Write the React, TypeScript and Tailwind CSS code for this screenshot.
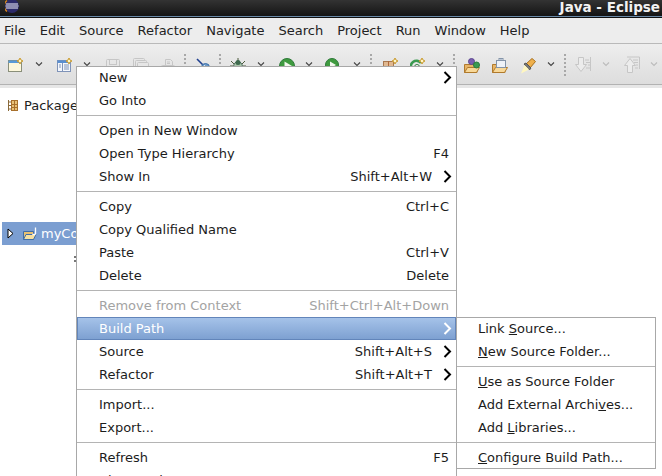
import React from "react";

const Chev = ({ dim }: { dim?: boolean }) => (
  <svg width="8" height="6" viewBox="0 0 8 6" className="mt-[3px] block">
    <path d="M1 1.5 L4 4.5 L7 1.5" fill="none" stroke={dim ? "#bcbcbc" : "#444444"} strokeWidth="1.1" />
  </svg>
);

const Sep = () => (
  <svg width="2" height="23" viewBox="0 0 2 23" className="-mt-[5px] block">
    {[1, 5, 9, 13, 17, 21].map((y) => (
      <rect key={y} x="0" y={y} width="2" height="2" fill="#a8a8a8" />
    ))}
  </svg>
);

const Star = ({ x = 11, y = 3 }: { x?: number; y?: number }) => (
  <path
    d={`M${x} ${y - 3} L${x + 1} ${y - 1} L${x + 3} ${y} L${x + 1} ${y + 1} L${x} ${y + 3} L${x - 1} ${y + 1} L${x - 3} ${y} L${x - 1} ${y - 1} Z`}
    fill="#fff6c8"
    stroke="#c99a2e"
    strokeWidth="1"
  />
);

const NewWin = () => (
  <svg width="16" height="16" viewBox="0 0 16 16" className="block">
    <rect x="0.5" y="2.5" width="13" height="11" fill="#fdf8dc" stroke="#8a8f7a" />
    <rect x="0.5" y="2.5" width="13" height="2.5" fill="#5a9bd8" />
    <Star x={12} y={3} />
  </svg>
);
const NewPkg = () => (
  <svg width="16" height="16" viewBox="0 0 16 16" className="block">
    <rect x="0.5" y="2.5" width="13" height="11" fill="#f4f7fc" stroke="#7f93b8" />
    <rect x="0.5" y="2.5" width="13" height="2.5" fill="#5a8fd0" />
    <path d="M5.5 5v8M7 7h5M7 9h5M7 11h5M2 7h2M2 9h2" stroke="#7f93b8" />
    <Star x={12} y={3} />
  </svg>
);
const Save = () => (
  <svg width="16" height="16" viewBox="0 0 16 16" fill="none" stroke="#c6c6c6" className="block">
    <rect x="1.5" y="1.5" width="13" height="13" rx="1" />
    <rect x="4.5" y="1.5" width="7" height="5" />
    <rect x="4.5" y="9.5" width="7" height="5" />
  </svg>
);
const SaveAll = () => (
  <svg width="16" height="16" viewBox="0 0 16 16" fill="none" stroke="#c6c6c6" className="block">
    <rect x="0.5" y="0.5" width="11" height="11" rx="1" />
    <rect x="2.5" y="2.5" width="11" height="11" rx="1" fill="#e6e6e6" />
    <rect x="4.5" y="4.5" width="11" height="11" rx="1" fill="#e6e6e6" />
  </svg>
);
const Print = () => (
  <svg width="16" height="16" viewBox="0 0 16 16" fill="none" stroke="#c6c6c6" className="block">
    <path d="M5.5 7V1.5h5l2 2V7" />
    <rect x="1.5" y="7.5" width="13" height="6" rx="1" />
    <path d="M7 4h3M7 5.5h3" />
  </svg>
);
const Pin = () => (
  <svg width="16" height="16" viewBox="0 0 16 16" className="block">
    <path d="M1 1 L8 8" stroke="#1f3f8f" strokeWidth="1.6" />
    <circle cx="9.5" cy="9.5" r="4" fill="#6f9bc8" stroke="#3a6da8" />
    <path d="M8 7 L12 12" stroke="#e4ecf5" />
  </svg>
);
const Bug = () => (
  <svg width="16" height="16" viewBox="0 0 16 16" className="block">
    <path d="M8 0v3M1 3l3 3M15 3l-3 3M0 8h3M16 8h-3M1 14l3-3M15 14l-3-3" stroke="#4c5a3c" />
    <ellipse cx="8" cy="9" rx="4.5" ry="5.5" fill="#a9c4a9" stroke="#4c6a5c" />
    <circle cx="8" cy="4.5" r="2.5" fill="#3e6a4e" />
  </svg>
);
const Run = () => (
  <svg width="16" height="16" viewBox="0 0 16 16" className="block">
    <circle cx="8" cy="8" r="7.5" fill="#3f9a3f" stroke="#2e7a3a" />
    <path d="M5.5 3.5 L13 8 L5.5 12.5 Z" fill="#f4f8ee" />
  </svg>
);
const Coverage = () => (
  <svg width="16" height="16" viewBox="0 0 16 16" className="block">
    <circle cx="7" cy="7" r="6.5" fill="#3f9a3f" stroke="#2e7a3a" />
    <path d="M5 3.5 L11 7 L5 10.5 Z" fill="#f4f8ee" />
    <rect x="9.5" y="11.5" width="5" height="3" fill="#fff" stroke="#d8283c" strokeWidth="1.2" />
  </svg>
);
const NewType = () => (
  <svg width="16" height="16" viewBox="0 0 16 16" className="block">
    <rect x="0.5" y="3.5" width="10" height="10" fill="#e0b890" stroke="#a87850" />
    <path d="M0 8.5h11M5.5 3v11" stroke="#b0683c" />
    <path d="M0 13.5h11" stroke="#c03838" />
    <Star x={12} y={3} />
  </svg>
);
const NewClass = () => (
  <svg width="16" height="16" viewBox="0 0 16 16" className="block">
    <path d="M2 12a5.5 5.5 0 0 1 9-7" fill="none" stroke="#3a9a50" strokeWidth="2.6" />
    <path d="M5 14.5a5 5 0 0 0 6-3" fill="none" stroke="#3a9a50" strokeWidth="2.6" />
    <circle cx="7" cy="9" r="2.5" fill="#fff" stroke="#2e7a3a" />
    <Star x={12} y={3} />
  </svg>
);
const FolderBase = () => (
  <>
    <path d="M0.5 14.5 V6.5 H13 V14.5 Z" fill="#e8b568" stroke="#b07a2c" />
    <path d="M0.5 14.5 L3.5 9.5 H15.5 L12.5 14.5 Z" fill="#f8d898" stroke="#b07a2c" />
  </>
);
const Open1 = () => (
  <svg width="16" height="16" viewBox="0 0 16 16" className="block">
    <FolderBase />
    <circle cx="7.5" cy="3.5" r="3" fill="#7a5fb0" stroke="#5c4790" />
    <circle cx="12.5" cy="7" r="3" fill="#3a9a50" stroke="#2a7a40" />
  </svg>
);
const Open2 = () => (
  <svg width="16" height="16" viewBox="0 0 16 16" className="block">
    <FolderBase />
    <rect x="4.5" y="2.5" width="9" height="7" fill="#eef2f8" stroke="#8494a8" />
    <rect x="7" y="0.5" width="4" height="2" fill="#b8c4d4" stroke="#8494a8" />
  </svg>
);
const Pen = () => (
  <svg width="16" height="16" viewBox="0 0 16 16" className="block">
    <path d="M6 6 L12 0.5 L15.5 3.5 L10 10 Z" fill="#efb04c" stroke="#a8701c" />
    <path d="M4 6 L6 5 L11 10 L9.5 12 Z" fill="#777" stroke="#555" />
    <path d="M4.5 7 L9 11.5 L1 15.5 Z" fill="#fff7c0" />
  </svg>
);
const ArrowDown = () => (
  <svg width="16" height="18" viewBox="0 0 16 18" className="-mt-[2px] block" fill="none" stroke="#c6c6c6">
    <path d="M3.5 1.5h5v7h3l-5.5 7-5.5-7h3z" fill="#ececec" />
    <path d="M10 4h4M11 6.5h4M13 9h2M11 12h4M15.5 1v14" />
  </svg>
);
const ArrowUp = () => (
  <svg width="16" height="18" viewBox="0 0 16 18" className="-mt-[2px] block" fill="none" stroke="#c6c6c6">
    <path d="M3.5 16.5h5v-7h3L6 2.500l-5.500 7h3z" fill="#ececec" />
    <path d="M3 1h12.500v12M9 4h5M10 6.500h4M12 9h2M11 12h3" />
  </svg>
);

const Arrow = ({ white }: { white?: boolean }) => (
  <svg width="9" height="13" viewBox="0 0 9 13" className="absolute right-[4px] top-[5px]">
    <path d="M1.5 1 L7 6.500 L1.500 12" fill="none" stroke={white ? "#ffffff" : "#000000"} strokeWidth="2" />
  </svg>
);

type Entry = {
  label?: React.ReactNode;
  key2?: string;
  sub?: boolean;
  disabled?: boolean;
  active?: boolean;
};

const MenuRow = ({ label, key2, sub, disabled, active }: Entry) => (
  <div
    className={`relative flex h-[23px] items-center justify-between pl-[22px] ${sub ? "pr-[24px]" : "pr-[7px]"} ${
      active
        ? "bg-gradient-to-b from-[#a7c4ea] to-[#7c9fd0] text-white shadow-[inset_0_0_0_1px_#6285ba]"
        : disabled
          ? "text-[#a3a3a3]"
          : "text-[#1c1c1c]"
    }`}
  >
    <span>{label}</span>
    {key2 && <span>{key2}</span>}
    {sub && <Arrow white={active} />}
  </div>
);

const Divider = () => (
  <div className="flex h-[7px] items-center">
    <div className="h-px w-full bg-[#b4b4b4]" />
  </div>
);

const SubRow = ({ children }: { children: React.ReactNode }) => (
  <div className="flex h-[23px] items-center pl-[21px] text-[#1c1c1c]">{children}</div>
);

const menus = ["File", "Edit", "Source", "Refactor", "Navigate", "Search", "Project", "Run", "Window", "Help"];

export default function App() {
  return (
    <div className="relative h-[476px] w-[662px] overflow-hidden bg-white font-['DejaVu_Sans',sans-serif] text-[13px] leading-none">
      {/* Title bar */}
      <div className="flex h-[16px] items-start justify-between overflow-hidden bg-gradient-to-b from-[#333333] to-[#151515] pl-[5px] pr-[2px]">
        <svg width="14" height="13" viewBox="0 0 14 13" className="block shrink-0">
          <circle cx="7" cy="6" r="7" fill="#2c2a6a" />
          <path d="M2 0.500 A7 7 0 0 0 2 11.500" fill="none" stroke="#e08a1e" strokeWidth="1.200" />
          <path d="M1 4h12M0.500 6h13M1 8h12" stroke="#f2f2fa" strokeWidth="1.200" />
        </svg>
        <span className="mt-[1px] text-[13.5px] font-bold text-[#f2f2f2]">Java - Eclipse</span>
      </div>
      <div className="h-px bg-[#6a8aa8]" />
      <div className="h-px bg-[#111111]" />

      {/* Menu bar */}
      <div className="flex h-[26px] items-center gap-[14px] border-b border-[#b9b9b9] bg-[#ededed] pl-[4px] text-[#222222]">
        {menus.map((m) => (
          <span key={m}>{m}</span>
        ))}
      </div>

      {/* Toolbar */}
      <div className="flex h-[41px] items-start overflow-hidden border-b border-[#b2b2b2] bg-gradient-to-b from-[#eeeeee] to-[#dddddd] pl-[8px] pt-[14px] *:shrink-0">
        <NewWin />
        <div className="ml-[11px]"><Chev /></div>
        <div className="ml-[14px]"><NewPkg /></div>
        <div className="ml-[10px]"><Chev /></div>
        <div className="ml-[14px]"><Save /></div>
        <div className="ml-[12px]"><SaveAll /></div>
        <div className="ml-[11px]"><Print /></div>
        <div className="ml-[8px]"><Sep /></div>
        <div className="ml-[10px]"><Pin /></div>
        <div className="ml-[7px]"><Sep /></div>
        <div className="ml-[9px]"><Bug /></div>
        <div className="ml-[11px]"><Chev /></div>
        <div className="ml-[14px]"><Run /></div>
        <div className="ml-[10px]"><Chev /></div>
        <div className="ml-[12px]"><Coverage /></div>
        <div className="ml-[12px]"><Chev /></div>
        <div className="ml-[9px]"><Sep /></div>
        <div className="ml-[11px]"><NewType /></div>
        <div className="ml-[11px]"><NewClass /></div>
        <div className="ml-[10px]"><Chev /></div>
        <div className="ml-[9px]"><Sep /></div>
        <div className="ml-[9px]"><Open1 /></div>
        <div className="ml-[12px]"><Open2 /></div>
        <div className="ml-[12px]"><Pen /></div>
        <div className="ml-[11px]"><Chev /></div>
        <div className="ml-[9px]"><Sep /></div>
        <div className="ml-[9px]"><ArrowDown /></div>
        <div className="ml-[11px]"><Chev dim /></div>
        <div className="ml-[14px]"><ArrowUp /></div>
        <div className="ml-[10px]"><Chev dim /></div>
      </div>

      {/* Strip under toolbar */}
      <div className="h-[3px] bg-[#e6e6e6]" />

      {/* Package explorer */}
      <div className="h-[389px] w-[76px] overflow-hidden rounded-tl-[6px] bg-white">
        <div className="flex h-[34px] items-center whitespace-nowrap pl-[8px] pt-[1px] text-[#222222]">
          <svg width="10" height="13" viewBox="0 0 10 13" fill="none" className="block shrink-0">
            <path d="M0.500 1v11M0.500 3h3M0.500 6.500h3M0.500 10h3" stroke="#8a6a3a" />
            <rect x="3.500" y="1.500" width="6" height="4" fill="#e8c27a" stroke="#a8702c" />
            <rect x="3.500" y="5.500" width="6" height="3" fill="#e8c27a" stroke="#a8702c" />
            <rect x="3.500" y="8.500" width="6" height="3" fill="#e8c27a" stroke="#a8702c" />
            <path d="M6.500 1.500v10" stroke="#a8702c" />
          </svg>
          <span className="ml-[6px]">Package Explorer</span>
        </div>
        <div className="ml-[2px] mt-[100px] flex h-[23px] items-center whitespace-nowrap bg-[#7b9ed1] text-white">
          <svg width="7" height="11" viewBox="0 0 7 11" className="ml-[5px] block shrink-0">
            <path d="M1 1 L6 5.500 L1 10 Z" fill="#ffffff" stroke="#000000" />
          </svg>
          <svg width="16" height="14" viewBox="0 0 16 14" className="ml-[9px] block shrink-0">
            <path d="M0.500 12.500V4.500h10v8z" fill="#e8c070" stroke="#3f6da8" />
            <path d="M0.500 12.500 L3 7.500H13L10.500 12.500Z" fill="#f6e0a0" stroke="#3f6da8" />
            <path d="M12.500 0.500V7M12.500 7a2 2 0 0 1-3 0" fill="none" stroke="#ffffff" strokeWidth="1.300" />
          </svg>
          <span className="ml-[2px]">myCoverage</span>
        </div>
        <div className="ml-[74px] mt-[11px] h-[6px] w-[2px] border-y-2 border-[#777777]" />
      </div>

      {/* Context menu */}
      <div className="absolute left-[76px] top-[66px] w-[381px] border-x border-t border-[#a8a8a8] bg-white">
        <div className="-mt-px">
          <MenuRow label="New" sub />
          <MenuRow label="Go Into" />
          <Divider />
          <MenuRow label="Open in New Window" />
          <MenuRow label="Open Type Hierarchy" key2="F4" />
          <MenuRow label="Show In" key2="Shift+Alt+W" sub />
          <Divider />
          <MenuRow label="Copy" key2="Ctrl+C" />
          <MenuRow label="Copy Qualified Name" />
          <MenuRow label="Paste" key2="Ctrl+V" />
          <MenuRow label="Delete" key2="Delete" />
          <Divider />
          <MenuRow label="Remove from Context" key2="Shift+Ctrl+Alt+Down" disabled />
          <MenuRow label="Build Path" sub active />
          <MenuRow label="Source" key2="Shift+Alt+S" sub />
          <MenuRow label="Refactor" key2="Shift+Alt+T" sub />
          <Divider />
          <MenuRow label="Import..." />
          <MenuRow label="Export..." />
          <Divider />
          <MenuRow label="Refresh" key2="F5" />
          <MenuRow label="Close Project" />
        </div>
      </div>

      {/* Submenu */}
      <div className="absolute left-[456px] top-[317px] h-[152px] w-[200px] border border-[#a8a8a8] bg-white">
        <div className="-mt-px">
          <SubRow><span>Link <u>S</u>ource...</span></SubRow>
          <SubRow><span><u>N</u>ew Source Folder...</span></SubRow>
          <Divider />
          <SubRow><span><u>U</u>se as Source Folder</span></SubRow>
          <SubRow><span>Add External Archi<u>v</u>es...</span></SubRow>
          <SubRow><span>Add <u>L</u>ibraries...</span></SubRow>
          <Divider />
          <SubRow><span><u>C</u>onfigure Build Path...</span></SubRow>
        </div>
      </div>
    </div>
  );
}
